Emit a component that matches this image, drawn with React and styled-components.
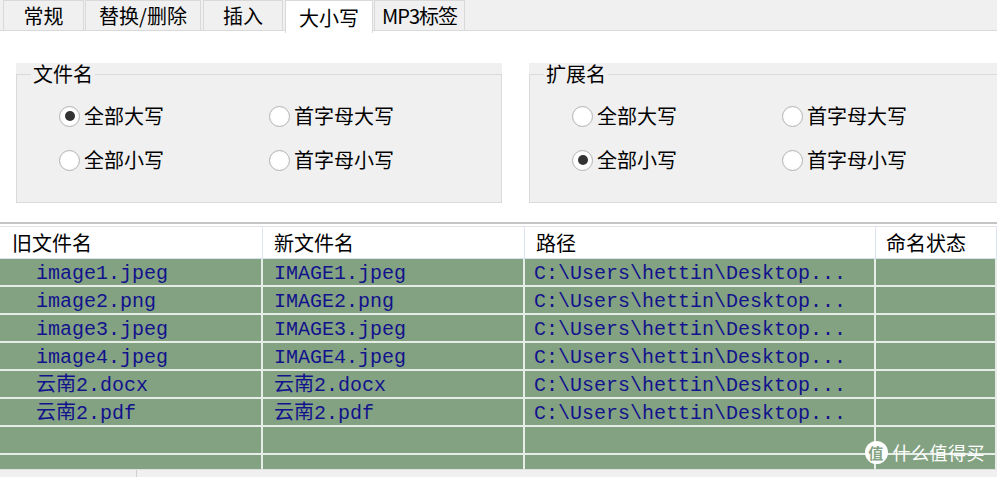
import React from "react";
import styled, { createGlobalStyle } from "styled-components";

const GlobalStyle = createGlobalStyle`
  html, body {
    margin: 0;
    padding: 0;
    background: #ffffff;
  }
  body {
    font-family: "Noto Sans CJK SC", "Liberation Sans", sans-serif;
    color: #000;
  }
`;

const Window = styled.div`
  position: relative;
  width: 997px;
  height: 477px;
  overflow: hidden;
  background: #ffffff;
`;

const TabBar = styled.div`
  display: flex;
  align-items: flex-start;
  height: 31px;
  padding-left: 3px;
  background: #f0f0f0;
  border-bottom: 1px solid #d9d9d9;
  box-sizing: border-box;
`;

const Tab = styled.div`
  display: flex;
  align-items: center;
  justify-content: center;
  box-sizing: border-box;
  width: ${p => p.width}px;
  height: ${p => (p.active ? 33 : 31)}px;
  margin-right: ${p => p.gap ?? 1}px;
  padding-top: ${p => (p.active ? 2 : 0)}px;
  border: 1px solid #d9d9d9;
  border-bottom: ${p => (p.active ? "none" : "1px solid #d9d9d9")};
  background: ${p => (p.active ? "#ffffff" : "#f0f0f0")};
  font-size: 20px;
  line-height: 1;
  position: relative;
  z-index: ${p => (p.active ? 1 : 0)};
  letter-spacing: ${p => (p.tight ? "-1px" : "0")};
`;

const Options = styled.div`
  display: flex;
  gap: 27px;
  height: 191px;
  box-sizing: border-box;
  padding: 32px 0 0 16px;
`;

const Group = styled.div`
  flex: none;
  width: ${p => p.width}px;
  height: 140px;
  background: #f0f0f0;
`;

const Frame = styled.fieldset`
  box-sizing: border-box;
  height: 140px;
  margin: 0;
  padding: 0;
  border: 1px solid #dadada;
  border-right-width: ${p => (p.open ? 0 : 1)}px;
  min-width: 0;
`;

const Legend = styled.legend`
  margin-left: 14px;
  padding: 0 2px;
  font-size: 20px;
  line-height: 22px;
  background: #f0f0f0;
`;

const RadioGrid = styled.div`
  display: grid;
  grid-template-columns: 210px 210px;
  row-gap: 22px;
  padding: 20px 0 0 42px;
`;

const Option = styled.label`
  display: flex;
  align-items: center;
  gap: 4px;
  height: 22px;
  font-size: 20px;
  line-height: 1;
`;

const RadioDot = styled.span`
  flex: none;
  box-sizing: border-box;
  width: 21px;
  height: 21px;
  border-radius: 50%;
  border: 1px solid #b4b4b4;
  background: radial-gradient(circle at 50% 50%, #ffffff 55%, #f2f2f2 100%);
  display: flex;
  align-items: center;
  justify-content: center;

  &::after {
    content: "";
    width: 10px;
    height: 10px;
    border-radius: 50%;
    background: ${p => (p.checked ? "#333333" : "transparent")};
  }
`;

const Radio = ({ checked, children }) => (
  <Option>
    <RadioDot checked={checked} />
    {children}
  </Option>
);

const Table = styled.div`
  border-top: 2px solid #c4c4c4;
  padding-top: 2px;
  background: #ffffff;
`;

const columns = "263px 262px 351px 1fr";

const HeaderRow = styled.div`
  display: grid;
  grid-template-columns: ${columns};
  height: 33px;
  border-top: 1px solid #e3e3e3;
  border-bottom: 1px solid #d7e2ee;
  box-sizing: border-box;
`;

const HeaderCell = styled.div`
  display: flex;
  align-items: center;
  padding-left: ${p => p.indent}px;
  border-right: 1px solid #dde6f0;
  font-size: 20px;
  white-space: nowrap;
`;

const Row = styled.div`
  display: grid;
  grid-template-columns: ${columns};
  height: ${p => p.height ?? 28}px;
  box-sizing: border-box;
  border-bottom: ${p => (p.last ? "none" : "2px solid #e6ece6")};
  background: #82a282;
`;

const Cell = styled.div`
  display: flex;
  align-items: center;
  min-width: 0;
  padding: 4px 0 0 ${p => p.indent ?? 0}px;
  border-right: 2px solid #e6ece6;
  font-family: "Liberation Mono", "Noto Sans CJK SC", monospace;
  font-size: 20px;
  line-height: 22px;
  color: #12128c;
  white-space: nowrap;
`;

const ScrollStrip = styled.div`
  height: 9px;
  background: #f0f0f0;
  border-top: 1px solid #e0e0e0;
  display: flex;
`;

const ScrollThumb = styled.div`
  width: 136px;
  border-right: 1px solid #d0d0d0;
`;

const Watermark = styled.div`
  position: absolute;
  right: 12px;
  bottom: 12px;
  display: flex;
  align-items: center;
  gap: 5px;
  color: #ffffff;
  font-size: 18px;
  letter-spacing: 0.5px;
`;

const Badge = styled.span`
  width: 23px;
  height: 23px;
  border-radius: 50%;
  background: #ffffff;
  color: #82a282;
  font-size: 15px;
  font-weight: 700;
  display: flex;
  align-items: center;
  justify-content: center;
`;

const tabs = [
  { label: "常规", width: 81 },
  { label: "替换/删除", width: 116, gap: 2 },
  { label: "插入", width: 80, gap: 2 },
  { label: "大小写", width: 88, active: true },
  { label: "MP3标签", width: 91, tight: true },
];

const files = [
  ["image1.jpeg", "IMAGE1.jpeg"],
  ["image2.png", "IMAGE2.png"],
  ["image3.jpeg", "IMAGE3.jpeg"],
  ["image4.jpeg", "IMAGE4.jpeg"],
  ["云南2.docx", "云南2.docx"],
  ["云南2.pdf", "云南2.pdf"],
];

const CaseGroup = ({ title, width, upper, open }) => (
  <Group width={width}>
    <Frame open={open}>
      <Legend>{title}</Legend>
      <RadioGrid>
        <Radio checked={upper}>全部大写</Radio>
        <Radio>首字母大写</Radio>
        <Radio checked={!upper}>全部小写</Radio>
        <Radio>首字母小写</Radio>
      </RadioGrid>
    </Frame>
  </Group>
);

const App = () => (
  <Window>
    <GlobalStyle />
    <TabBar>
      {tabs.map(t => (
        <Tab key={t.label} {...t}>
          {t.label}
        </Tab>
      ))}
    </TabBar>

    <Options>
      <CaseGroup title="文件名" width={486} upper />
      <CaseGroup title="扩展名" width={480} open />
    </Options>

    <Table>
      <HeaderRow>
        <HeaderCell indent={12}>旧文件名</HeaderCell>
        <HeaderCell indent={11}>新文件名</HeaderCell>
        <HeaderCell indent={11}>路径</HeaderCell>
        <HeaderCell indent={10}>命名状态</HeaderCell>
      </HeaderRow>
      {files.map(([oldName, newName]) => (
        <Row key={oldName}>
          <Cell indent={36}>{oldName}</Cell>
          <Cell indent={11}>{newName}</Cell>
          <Cell indent={9}>C:\Users\hettin\Desktop...</Cell>
          <Cell />
        </Row>
      ))}
      <Row>
        <Cell />
        <Cell />
        <Cell />
        <Cell />
      </Row>
      <Row height={14} last>
        <Cell />
        <Cell />
        <Cell />
        <Cell />
      </Row>
      <ScrollStrip>
        <ScrollThumb />
      </ScrollStrip>
    </Table>

    <Watermark>
      <Badge>值</Badge>
      什么值得买
    </Watermark>
  </Window>
);

export default App;
